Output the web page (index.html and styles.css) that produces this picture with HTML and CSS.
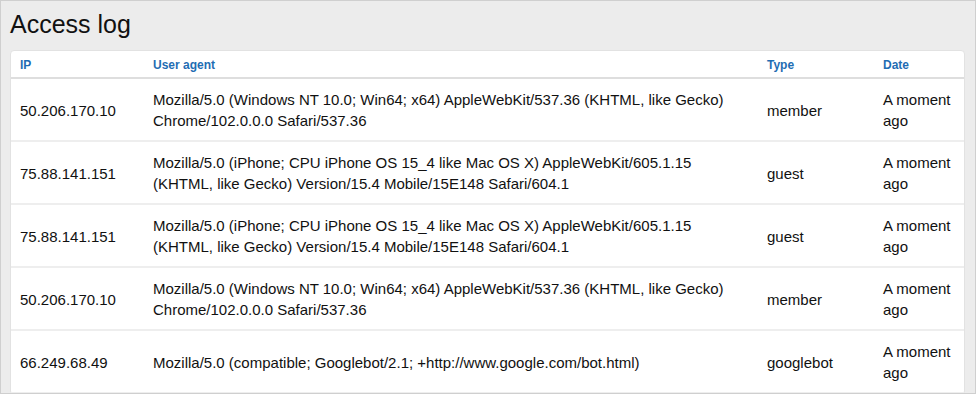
FILE: index.html
```html
<!DOCTYPE html>
<html>
<head>
<meta charset="utf-8">
<link rel="stylesheet" href="styles.css">
</head>
<body>
<div class="frame">
  <h1 class="title">Access log</h1>
  <div class="card">
    <table class="log">
      <colgroup>
        <col class="c-ip"><col class="c-ua"><col class="c-type"><col class="c-date">
      </colgroup>
      <thead>
        <tr><th>IP</th><th>User agent</th><th>Type</th><th>Date</th></tr>
      </thead>
      <tbody>
        <tr><td>50.206.170.10</td><td>Mozilla/5.0 (Windows NT 10.0; Win64; x64) AppleWebKit/537.36 (KHTML, like Gecko) Chrome/102.0.0.0 Safari/537.36</td><td>member</td><td>A moment ago</td></tr>
        <tr><td>75.88.141.151</td><td>Mozilla/5.0 (iPhone; CPU iPhone OS 15_4 like Mac OS X) AppleWebKit/605.1.15 (KHTML, like Gecko) Version/15.4 Mobile/15E148 Safari/604.1</td><td>guest</td><td>A moment ago</td></tr>
        <tr><td>75.88.141.151</td><td>Mozilla/5.0 (iPhone; CPU iPhone OS 15_4 like Mac OS X) AppleWebKit/605.1.15 (KHTML, like Gecko) Version/15.4 Mobile/15E148 Safari/604.1</td><td>guest</td><td>A moment ago</td></tr>
        <tr><td>50.206.170.10</td><td>Mozilla/5.0 (Windows NT 10.0; Win64; x64) AppleWebKit/537.36 (KHTML, like Gecko) Chrome/102.0.0.0 Safari/537.36</td><td>member</td><td>A moment ago</td></tr>
        <tr><td>66.249.68.49</td><td>Mozilla/5.0 (compatible; Googlebot/2.1; +http://www.google.com/bot.html)</td><td>googlebot</td><td>A moment ago</td></tr>
      </tbody>
    </table>
  </div>
</div>
</body>
</html>
```
FILE: styles.css
```css
html, body {
  margin: 0;
  padding: 0;
}
body {
  font-family: "Liberation Sans", Arial, sans-serif;
  color: #111;
  overflow: hidden;
}
.frame {
  box-sizing: border-box;
  width: 976px;
  height: 394px;
  background: #ececec;
  border: 1px solid #cfcfcf;
  padding: 0 10px 0 9px;
  overflow: hidden;
}
.title {
  margin: 0;
  padding: 9px 0 0 0;
  height: 40px;
  font-size: 25px;
  font-weight: normal;
  line-height: 28px;
  color: #111;
}
.card {
  background: #fff;
  border: 1px solid #e2e2e2;
  border-radius: 4px;
}
.log {
  width: 100%;
  border-collapse: collapse;
  table-layout: fixed;
}
.c-ip { width: 133px; }
.c-ua { width: 614px; }
.c-type { width: 116px; }
.c-date { width: auto; }
.log th {
  text-align: left;
  font-size: 12px;
  font-weight: bold;
  color: #1f6db3;
  padding: 6px 9px 4px 9px;
  line-height: 16px;
  border-bottom: 2px solid #dedede;
}
.log td {
  font-size: 15px;
  line-height: 21px;
  padding: 10px 9px 9px 9px;
  vertical-align: middle;
  border-bottom: 2px solid #eeeeee;
  color: #111;
}
```
